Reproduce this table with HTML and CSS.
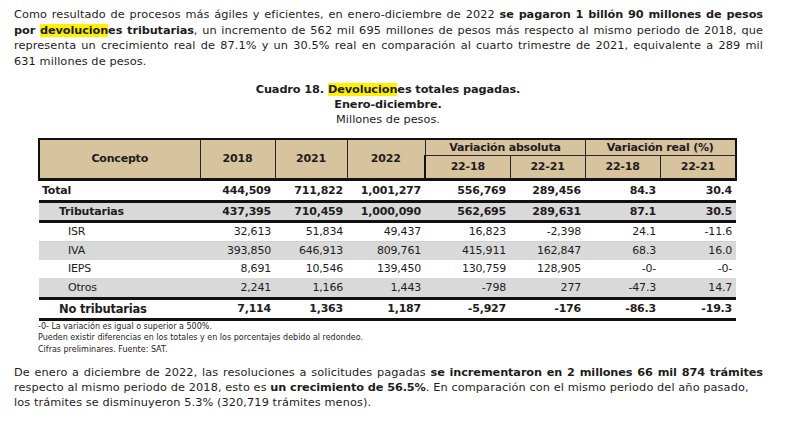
FILE: index.html
```html
<!DOCTYPE html>
<html lang="es">
<head>
<meta charset="utf-8">
<link rel="stylesheet" href="styles.css">
</head>
<body>
<div class="page">
  <p class="para intro">
    <span class="line just">Como resultado de procesos más ágiles y eficientes, en enero-diciembre de 2022 <b>se pagaron 1 billón 90 millones de pesos</b></span>
    <span class="line just"><b>por <mark>devolucion</mark>es tributarias</b>, un incremento de 562 mil 695 millones de pesos más respecto al mismo periodo de 2018, que</span>
    <span class="line just">representa un crecimiento real de 87.1% y un 30.5% real en comparación al cuarto trimestre de 2021, equivalente a 289 mil</span>
    <span class="line">631 millones de pesos.</span>
  </p>

  <div class="caption">
    <div class="cap-title">Cuadro 18. <mark>Devolucion</mark>es totales pagadas.</div>
    <div class="cap-title">Enero-diciembre.</div>
    <div class="cap-sub">Millones de pesos.</div>
  </div>

  <table class="data">
    <colgroup>
      <col class="c-concept"><col class="c-y18"><col class="c-y21"><col class="c-y22">
      <col class="c-a1"><col class="c-a2"><col class="c-r1"><col class="c-r2">
    </colgroup>
    <thead>
      <tr class="h1">
        <th rowspan="2">Concepto</th>
        <th rowspan="2">2018</th>
        <th rowspan="2">2021</th>
        <th rowspan="2">2022</th>
        <th colspan="2">Variación absoluta</th>
        <th colspan="2">Variación real (%)</th>
      </tr>
      <tr class="h2">
        <th>22-18</th><th>22-21</th><th>22-18</th><th>22-21</th>
      </tr>
    </thead>
    <tbody>
      <tr class="r-total">
        <td class="lbl">Total</td><td>444,509</td><td>711,822</td><td>1,001,277</td><td>556,769</td><td>289,456</td><td>84.3</td><td>30.4</td>
      </tr>
      <tr class="r-trib">
        <td class="lbl">Tributarias</td><td>437,395</td><td>710,459</td><td>1,000,090</td><td>562,695</td><td>289,631</td><td>87.1</td><td>30.5</td>
      </tr>
      <tr class="r-sub r-isr">
        <td class="lbl">ISR</td><td>32,613</td><td>51,834</td><td>49,437</td><td>16,823</td><td>-2,398</td><td>24.1</td><td>-11.6</td>
      </tr>
      <tr class="r-sub shade">
        <td class="lbl">IVA</td><td>393,850</td><td>646,913</td><td>809,761</td><td>415,911</td><td>162,847</td><td>68.3</td><td>16.0</td>
      </tr>
      <tr class="r-sub">
        <td class="lbl">IEPS</td><td>8,691</td><td>10,546</td><td>139,450</td><td>130,759</td><td>128,905</td><td>-0-</td><td>-0-</td>
      </tr>
      <tr class="r-sub shade r-otros">
        <td class="lbl">Otros</td><td>2,241</td><td>1,166</td><td>1,443</td><td>-798</td><td>277</td><td>-47.3</td><td>14.7</td>
      </tr>
      <tr class="r-notrib">
        <td class="lbl">No tributarias</td><td>7,114</td><td>1,363</td><td>1,187</td><td>-5,927</td><td>-176</td><td>-86.3</td><td>-19.3</td>
      </tr>
    </tbody>
  </table>

  <div class="notes">
    <div>-0- La variación es igual o superior a 500%.</div>
    <div>Pueden existir diferencias en los totales y en los porcentajes debido al redondeo.</div>
    <div>Cifras preliminares. Fuente: SAT.</div>
  </div>

  <p class="para outro">
    <span class="line just">De enero a diciembre de 2022, las resoluciones a solicitudes pagadas <b>se incrementaron en 2 millones 66 mil 874 trámites</b></span>
    <span class="line">respecto al mismo periodo de 2018, esto es <b>un crecimiento de 56.5%</b>. En comparación con el mismo periodo del año pasado,</span>
    <span class="line">los trámites se disminuyeron 5.3% (320,719 trámites menos).</span>
  </p>
</div>
</body>
</html>
```

FILE: styles.css
```css
html, body {
  margin: 0;
  padding: 0;
  background: #ffffff;
}

body {
  font-family: "DejaVu Sans", "Open Sans", sans-serif;
  color: #1f1c1d;
  font-size: 11.3px;
}

.page {
  width: 788px;
  padding-top: 7px;
}

.para {
  margin: 0;
  padding-left: 14px;
  width: 749px;
  line-height: 15.7px;
  letter-spacing: 0.1px;
}

.para .line {
  display: block;
  white-space: nowrap;
  text-align: left;
}

.para .line.just {
  text-align: justify;
  text-align-last: justify;
}

b {
  font-weight: 700;
  letter-spacing: -0.1px;
}

mark {
  background: #fff200;
  color: inherit;
}

.caption {
  margin-top: 12px;
  width: 776px;
  text-align: center;
  line-height: 15px;
}

.cap-title {
  font-weight: 700;
  letter-spacing: -0.1px;
}

.cap-sub {
  font-weight: 400;
}

.data {
  margin-top: 11px;
  margin-left: 38px;
  width: 697px;
  border-collapse: collapse;
  table-layout: fixed;
  font-size: 11px;
  letter-spacing: -0.2px;
}

.c-concept { width: 161px; }
.c-y18 { width: 75px; }
.c-y21 { width: 72px; }
.c-y22 { width: 78px; }
.c-a1 { width: 85px; }
.c-a2 { width: 75px; }
.c-r1 { width: 75px; }
.c-r2 { width: 76px; }

.data th {
  background: #d8c39f;
  font-weight: 700;
  text-align: center;
  border: 1.5px solid #262626;
  padding: 0;
}

.data thead tr.h1 th {
  border-top: 2.5px solid #111;
  height: 15px;
}

.data thead tr.h2 th {
  height: 22px;
  border-bottom: 3px solid #111;
}

.data thead th[rowspan] {
  border-bottom: 3px solid #111;
}

.data thead tr th:first-child {
  border-left: 2.5px solid #111;
}

.data thead tr th:last-child {
  border-right: 2.5px solid #111;
}

.data td {
  text-align: right;
  padding: 0 4px 0 0;
  height: 18px;
  white-space: nowrap;
}

.data td.lbl {
  text-align: left;
}

.r-total td {
  font-weight: 700;
  border-bottom: 3px solid #111;
  height: 19px;
}

.r-total td.lbl {
  padding-left: 3px;
}

.r-trib td {
  font-weight: 700;
  background: #d9d9d9;
  border-bottom: 3px solid #111;
  height: 17px;
}

.r-trib td.lbl {
  padding-left: 20px;
}

.r-sub td.lbl {
  padding-left: 29px;
}

.r-isr td {
  border-bottom: 1px solid #d0d0d0;
}

.shade td {
  background: #d9d9d9;
}

.r-otros td {
  border-bottom: 3px solid #111;
  height: 19px;
}

.r-notrib td {
  font-weight: 700;
  border-bottom: 3px solid #111;
  height: 18px;
}

.r-notrib td.lbl {
  padding-left: 20px;
  font-size: 11.5px;
}

.notes {
  margin-top: 0;
  padding-left: 38px;
  font-size: 8px;
  line-height: 11.5px;
}

.outro {
  margin-top: 10px;
  line-height: 15px;
}
```
